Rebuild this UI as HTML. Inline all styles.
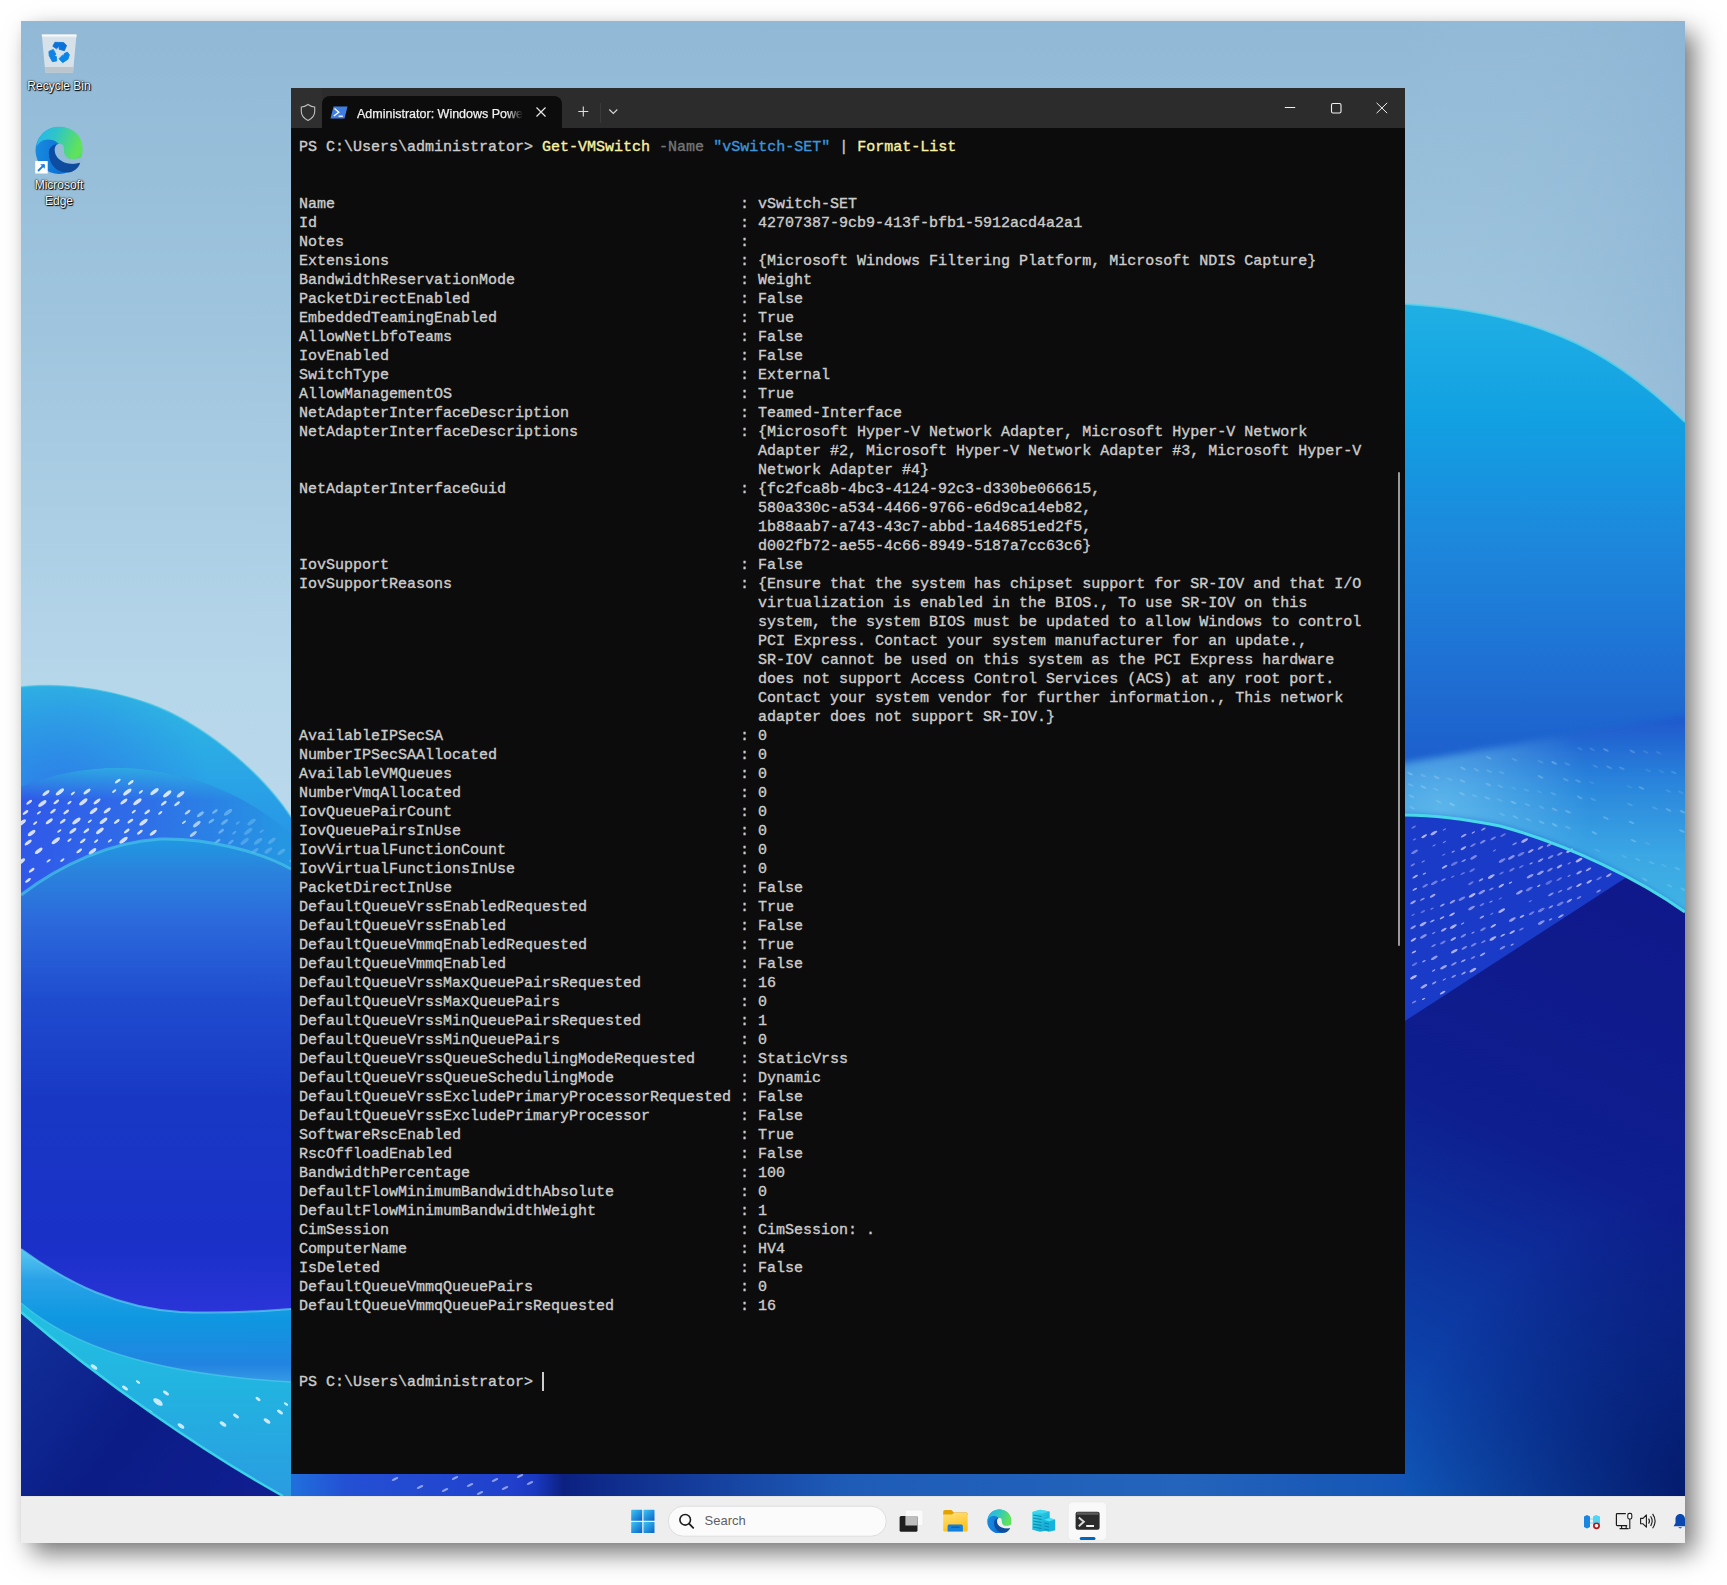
<!DOCTYPE html>
<html><head><meta charset="utf-8">
<style>
*{margin:0;padding:0;box-sizing:border-box}
html,body{width:1727px;height:1585px;overflow:hidden;background:#fff}
body{position:relative;font-family:"Liberation Sans",sans-serif}
#frame{position:absolute;left:21px;top:21px;width:1664px;height:1522px;overflow:hidden;
 box-shadow:10px 11px 24px -1px rgba(0,0,0,.55),0 0 8px rgba(0,0,0,.04)}
#wall{position:absolute;left:0;top:0}
#taskbar{position:absolute;left:0;top:1475px;width:1664px;height:47px;background:#eeeeee;border-top:1px solid #e4e4e4}
#term{position:absolute;left:270px;top:67px;width:1114px;height:1386px;background:#0c0c0c;overflow:hidden}
#tbar{position:absolute;left:0;top:0;width:1114px;height:40px;background:#2c2c2c}
#tab{position:absolute;left:31px;top:8px;width:240px;height:32px;background:#0c0c0c;border-radius:8px 8px 0 0}
#shieldbox{position:absolute;left:0;top:0;width:31px;height:40px;background:#2f2f2f}
#ttl{position:absolute;left:35px;top:10px;-webkit-text-stroke-width:0.25px;width:166px;overflow:hidden;white-space:nowrap;font-size:12.5px;color:#f2f2f2;line-height:16px;
 -webkit-mask-image:linear-gradient(90deg,#000 150px,transparent 166px);mask-image:linear-gradient(90deg,#000 150px,transparent 166px)}
#sbar{position:absolute;left:1107px;top:384px;width:2px;height:474px;background:#9a9a9a;border-radius:1px}
#cursor{position:absolute;left:251px;top:1284px;width:2px;height:19px;background:#cccccc}
#desk{position:absolute;left:0;top:0}
.dl{position:absolute;left:-2px;width:80px;text-align:center;font-size:12px;line-height:15px;color:#fff;
 text-shadow:0 0 2px #000,1px 1px 1px #000,0 0 1px #000}
#srch{position:absolute;left:683.5px;top:14.8px;font-size:13px;line-height:18px;color:#5f5f5f}
pre{position:absolute;left:8px;top:49.5px;font-family:"Liberation Mono",monospace;font-size:15px;line-height:19px;color:#cccccc;white-space:pre;-webkit-text-stroke-width:0.35px}
.y{color:#f9f1a5}.g{color:#767676}.b{color:#3a96dd}
</style></head><body>
<svg width="0" height="0" style="position:absolute">
<defs>
 <linearGradient id="edgeTop" x1="0" y1="0" x2="1" y2="0.3">
  <stop offset="0" stop-color="#22b6f2"/><stop offset="0.45" stop-color="#2fc4c8"/><stop offset="1" stop-color="#5fe35a"/>
 </linearGradient>
 <linearGradient id="edgeBlue" x1="0" y1="0" x2="1" y2="0.15">
  <stop offset="0" stop-color="#1a8ee0"/><stop offset="0.75" stop-color="#0a6cd4"/><stop offset="0.85" stop-color="#3cc8a0"/><stop offset="1" stop-color="#58dc62"/>
 </linearGradient>
 <linearGradient id="edgeDark" x1="0" y1="0" x2="1" y2="1">
  <stop offset="0" stop-color="#0a4ea8"/><stop offset="1" stop-color="#114a98"/>
 </linearGradient>
 <symbol id="edge" viewBox="0 0 48 48">
  <circle cx="24" cy="24.5" r="23.5" fill="url(#edgeBlue)"/>
  <path d="M1.5,21 C3,8 12.5,0.8 24,0.8 C37.5,0.8 47.5,10 47.5,21.5 C47.5,28.5 42.5,33 36.5,33 C31,33 27.5,30 27.5,26 C26.5,18 20,13.5 13,13.5 C7.5,13.5 3.5,16.5 1.5,21 Z" fill="url(#edgeTop)"/>
  <path d="M13.8,27 C13.8,41 25,48 35,46.3 C40.5,45 44,41 45.3,36.5 C41,38 33,38.5 27,35.2 C22,32.3 19.3,28 19.8,22.5 C20,20.5 20.8,19.2 21.8,18.3 C17,18.8 13.8,22 13.8,27 Z" fill="url(#edgeDark)"/>
  <path d="M19.8,22.5 C20.5,19 22.5,17.8 25,17.8 C28,17.8 29.2,20.5 29,24.5 C29,29.5 32,32.8 37,33 C40.5,33.2 44,32.5 48.5,30 L48.5,36 L45.3,36.5 C41,38 33,38.5 27,35.2 C22,32.3 19.3,28 19.8,22.5 Z" fill="currentColor"/>
 </symbol>
 <linearGradient id="winlogo" x1="0" y1="0" x2="1" y2="1">
  <stop offset="0" stop-color="#3cc6f4"/><stop offset="1" stop-color="#0a62c9"/>
 </linearGradient>
 <linearGradient id="folderBody" x1="0" y1="0" x2="0.3" y2="1">
  <stop offset="0" stop-color="#ffe07a"/><stop offset="1" stop-color="#ffc21a"/>
 </linearGradient>
 <linearGradient id="srv" x1="0" y1="0" x2="1" y2="1">
  <stop offset="0" stop-color="#38e0f0"/><stop offset="1" stop-color="#0a9ccc"/>
 </linearGradient>
</defs>
</svg>
<div id="frame">
<svg id="wall" width="1664" height="1475" viewBox="21 21 1664 1475">
<defs>
 <linearGradient id="sky" x1="0" y1="21" x2="0" y2="900" gradientUnits="userSpaceOnUse">
  <stop offset="0" stop-color="#91b9d6"/><stop offset="0.35" stop-color="#9fc5de"/><stop offset="0.75" stop-color="#b6d6ea"/><stop offset="1" stop-color="#bcd9ec"/>
 </linearGradient>
 <linearGradient id="skyR" x1="1405" y1="0" x2="1685" y2="0" gradientUnits="userSpaceOnUse">
  <stop offset="0" stop-color="#9ec3dc" stop-opacity="0"/><stop offset="1" stop-color="#8cb3d3" stop-opacity="0.6"/>
 </linearGradient>
 <linearGradient id="l2" x1="0" y1="684" x2="0" y2="860" gradientUnits="userSpaceOnUse">
  <stop offset="0" stop-color="#2ebbe2"/><stop offset="0.5" stop-color="#2aa6e6"/><stop offset="1" stop-color="#2690e6"/>
 </linearGradient>
 <radialGradient id="l2shade" cx="60" cy="800" r="150" gradientUnits="userSpaceOnUse">
  <stop offset="0" stop-color="#2f6ee8" stop-opacity="0.7"/><stop offset="1" stop-color="#2f6ee8" stop-opacity="0"/>
 </radialGradient>
 <linearGradient id="l3" x1="21" y1="0" x2="291" y2="0" gradientUnits="userSpaceOnUse">
  <stop offset="0" stop-color="#3058e8"/><stop offset="0.45" stop-color="#2f6ee8"/><stop offset="1" stop-color="#2598e2"/>
 </linearGradient>
 <linearGradient id="l3rim" x1="0" y1="760" x2="0" y2="800" gradientUnits="userSpaceOnUse">
  <stop offset="0" stop-color="#2cc0e0" stop-opacity="0.9"/><stop offset="1" stop-color="#2cc0e0" stop-opacity="0"/>
 </linearGradient>
 <linearGradient id="l4" x1="0" y1="840" x2="0" y2="1310" gradientUnits="userSpaceOnUse">
  <stop offset="0" stop-color="#2098e2"/><stop offset="0.064" stop-color="#2a84dc"/><stop offset="0.17" stop-color="#2c6adc"/><stop offset="0.34" stop-color="#1f4ccf"/><stop offset="0.55" stop-color="#1838c4"/><stop offset="0.87" stop-color="#1a30c8"/><stop offset="1" stop-color="#2a34d8"/>
 </linearGradient>
 <linearGradient id="l5" x1="0" y1="1250" x2="0" y2="1385" gradientUnits="userSpaceOnUse">
  <stop offset="0" stop-color="#58c8f0"/><stop offset="0.22" stop-color="#2aa2e8"/><stop offset="0.5" stop-color="#0e98e0"/><stop offset="0.85" stop-color="#2284e0"/><stop offset="1" stop-color="#3a9ee6"/>
 </linearGradient>
 <linearGradient id="l6" x1="0" y1="1310" x2="0" y2="1496" gradientUnits="userSpaceOnUse">
  <stop offset="0" stop-color="#22c0e2"/><stop offset="0.4" stop-color="#22b4e0"/><stop offset="1" stop-color="#2a9ce0"/>
 </linearGradient>
 <linearGradient id="l7" x1="21" y1="1320" x2="260" y2="1496" gradientUnits="userSpaceOnUse">
  <stop offset="0" stop-color="#12309a"/><stop offset="0.5" stop-color="#0b1c86"/><stop offset="1" stop-color="#101e90"/>
 </linearGradient>
 <linearGradient id="r2" x1="0" y1="300" x2="0" y2="780" gradientUnits="userSpaceOnUse">
  <stop offset="0" stop-color="#20b0e4"/><stop offset="0.25" stop-color="#12a0e2"/><stop offset="0.5" stop-color="#1d88dc"/><stop offset="0.8" stop-color="#1f6dd2"/><stop offset="1" stop-color="#1c5ccc"/>
 </linearGradient>
 <linearGradient id="r3" x1="0" y1="716" x2="0" y2="912" gradientUnits="userSpaceOnUse">
  <stop offset="0" stop-color="#1e56cc"/><stop offset="0.35" stop-color="#2a86dc"/><stop offset="0.7" stop-color="#3aa6e4"/><stop offset="1" stop-color="#40b4e4"/>
 </linearGradient>
 <filter id="soft" x="-5%" y="-20%" width="110%" height="140%"><feGaussianBlur stdDeviation="3.5"/></filter>
 <radialGradient id="r3hl" cx="1440" cy="805" r="150" gradientUnits="userSpaceOnUse">
  <stop offset="0" stop-color="#80d4f4" stop-opacity="0.55"/><stop offset="1" stop-color="#80d4f4" stop-opacity="0"/>
 </radialGradient>
 <linearGradient id="r5" x1="1685" y1="880" x2="1405" y2="1496" gradientUnits="userSpaceOnUse">
  <stop offset="0" stop-color="#10188a"/><stop offset="0.45" stop-color="#0e1e8e"/><stop offset="0.8" stop-color="#0c40a8"/><stop offset="1" stop-color="#1058b8"/>
 </linearGradient>
 <radialGradient id="r5b" cx="1700" cy="1496" r="300" gradientUnits="userSpaceOnUse">
  <stop offset="0" stop-color="#000850" stop-opacity="0.7"/><stop offset="1" stop-color="#000850" stop-opacity="0"/>
 </radialGradient>
 <linearGradient id="bot" x1="291" y1="0" x2="1405" y2="0" gradientUnits="userSpaceOnUse">
  <stop offset="0" stop-color="#2070dc"/><stop offset="0.05" stop-color="#2450d4"/><stop offset="0.2" stop-color="#2040cc"/><stop offset="0.22" stop-color="#1a38c0"/><stop offset="0.245" stop-color="#0c2080"/><stop offset="0.27" stop-color="#0e2888"/><stop offset="0.5" stop-color="#1e5cb8"/><stop offset="0.8" stop-color="#2464bc"/><stop offset="1" stop-color="#1454b4"/>
 </linearGradient>
</defs>
<rect x="21" y="21" width="1664" height="1475" fill="url(#sky)"/>
<rect x="1405" y="21" width="280" height="900" fill="url(#skyR)"/>
<!-- LEFT -->
<path d="M21,687 C45,684 95,684 150,704 C200,722 260,770 291,817 L330,880 L330,1500 L21,1500 Z" fill="url(#l2)"/>
<path d="M21,687 C45,684 95,684 150,704 C200,722 260,770 291,817 L330,880 L330,1500 L21,1500 Z" fill="url(#l2shade)"/>
<path d="M21,687 C45,684 95,684 150,704 C200,722 260,770 291,817" fill="none" stroke="#48c8e6" stroke-width="1.5" opacity="0.7"/>
<path d="M21,787 C60,770 110,764 150,770 C210,778 260,805 291,835 L330,880 L330,1500 L21,1500 Z" fill="url(#l3)"/>
<path d="M21,787 C60,770 110,764 150,770 C210,778 260,805 291,835 L291,860 L21,820 Z" fill="url(#l3rim)"/>
<ellipse cx="21.8" cy="822.8" rx="5.0" ry="1.9" transform="rotate(-38 21.8 822.8)" fill="#ffffff" opacity="0.80"/>
<ellipse cx="25.5" cy="812.5" rx="3.4" ry="1.3" transform="rotate(-38 25.5 812.5)" fill="#ffffff" opacity="0.80"/>
<ellipse cx="29.2" cy="802.3" rx="3.4" ry="1.3" transform="rotate(-38 29.2 802.3)" fill="#ffffff" opacity="0.80"/>
<ellipse cx="21.3" cy="861.6" rx="4.6" ry="1.8" transform="rotate(-38 21.3 861.6)" fill="#ffffff" opacity="0.80"/>
<ellipse cx="28.2" cy="842.6" rx="4.2" ry="1.6" transform="rotate(-38 28.2 842.6)" fill="#ffffff" opacity="0.80"/>
<ellipse cx="31.6" cy="833.0" rx="4.6" ry="1.8" transform="rotate(-38 31.6 833.0)" fill="#ffffff" opacity="0.80"/>
<ellipse cx="35.2" cy="823.1" rx="2.5" ry="1.0" transform="rotate(-38 35.2 823.1)" fill="#ffffff" opacity="0.80"/>
<ellipse cx="38.9" cy="812.7" rx="2.5" ry="1.0" transform="rotate(-38 38.9 812.7)" fill="#ffffff" opacity="0.80"/>
<ellipse cx="42.3" cy="803.5" rx="5.0" ry="1.9" transform="rotate(-38 42.3 803.5)" fill="#ffffff" opacity="0.80"/>
<ellipse cx="46.0" cy="793.1" rx="4.2" ry="1.6" transform="rotate(-38 46.0 793.1)" fill="#ffffff" opacity="0.80"/>
<ellipse cx="28.0" cy="880.4" rx="3.4" ry="1.3" transform="rotate(-38 28.0 880.4)" fill="#ffffff" opacity="0.80"/>
<ellipse cx="31.7" cy="870.3" rx="3.4" ry="1.3" transform="rotate(-38 31.7 870.3)" fill="#ffffff" opacity="0.80"/>
<ellipse cx="38.7" cy="850.8" rx="4.6" ry="1.8" transform="rotate(-38 38.7 850.8)" fill="#ffffff" opacity="0.80"/>
<ellipse cx="49.3" cy="821.3" rx="4.2" ry="1.6" transform="rotate(-38 49.3 821.3)" fill="#ffffff" opacity="0.80"/>
<ellipse cx="53.0" cy="811.2" rx="3.4" ry="1.3" transform="rotate(-38 53.0 811.2)" fill="#ffffff" opacity="0.80"/>
<ellipse cx="56.3" cy="801.9" rx="3.4" ry="1.3" transform="rotate(-38 56.3 801.9)" fill="#ffffff" opacity="0.80"/>
<ellipse cx="59.9" cy="791.9" rx="5.0" ry="1.9" transform="rotate(-38 59.9 791.9)" fill="#ffffff" opacity="0.80"/>
<ellipse cx="48.6" cy="860.8" rx="2.5" ry="1.0" transform="rotate(-38 48.6 860.8)" fill="#ffffff" opacity="0.80"/>
<ellipse cx="55.8" cy="840.7" rx="5.0" ry="1.9" transform="rotate(-38 55.8 840.7)" fill="#ffffff" opacity="0.80"/>
<ellipse cx="59.3" cy="831.0" rx="2.5" ry="1.0" transform="rotate(-38 59.3 831.0)" fill="#ffffff" opacity="0.80"/>
<ellipse cx="62.8" cy="821.3" rx="3.4" ry="1.3" transform="rotate(-38 62.8 821.3)" fill="#ffffff" opacity="0.80"/>
<ellipse cx="66.2" cy="812.0" rx="3.4" ry="1.3" transform="rotate(-38 66.2 812.0)" fill="#ffffff" opacity="0.80"/>
<ellipse cx="69.5" cy="802.6" rx="2.5" ry="1.0" transform="rotate(-38 69.5 802.6)" fill="#ffffff" opacity="0.80"/>
<ellipse cx="72.9" cy="793.4" rx="2.5" ry="1.0" transform="rotate(-38 72.9 793.4)" fill="#ffffff" opacity="0.80"/>
<ellipse cx="62.4" cy="860.1" rx="2.5" ry="1.0" transform="rotate(-38 62.4 860.1)" fill="#ffffff" opacity="0.80"/>
<ellipse cx="69.5" cy="840.1" rx="2.5" ry="1.0" transform="rotate(-38 69.5 840.1)" fill="#ffffff" opacity="0.80"/>
<ellipse cx="72.9" cy="830.8" rx="4.2" ry="1.6" transform="rotate(-38 72.9 830.8)" fill="#ffffff" opacity="0.80"/>
<ellipse cx="76.4" cy="821.0" rx="5.0" ry="1.9" transform="rotate(-38 76.4 821.0)" fill="#ffffff" opacity="0.80"/>
<ellipse cx="83.3" cy="801.9" rx="5.0" ry="1.9" transform="rotate(-38 83.3 801.9)" fill="#ffffff" opacity="0.80"/>
<ellipse cx="87.0" cy="791.6" rx="4.2" ry="1.6" transform="rotate(-38 87.0 791.6)" fill="#ffffff" opacity="0.80"/>
<ellipse cx="79.2" cy="850.9" rx="3.4" ry="1.3" transform="rotate(-38 79.2 850.9)" fill="#ffffff" opacity="0.80"/>
<ellipse cx="82.8" cy="840.9" rx="3.4" ry="1.3" transform="rotate(-38 82.8 840.9)" fill="#ffffff" opacity="0.80"/>
<ellipse cx="86.4" cy="830.8" rx="3.4" ry="1.3" transform="rotate(-38 86.4 830.8)" fill="#ffffff" opacity="0.80"/>
<ellipse cx="89.8" cy="821.3" rx="2.5" ry="1.0" transform="rotate(-38 89.8 821.3)" fill="#ffffff" opacity="0.80"/>
<ellipse cx="93.6" cy="810.9" rx="4.6" ry="1.8" transform="rotate(-38 93.6 810.9)" fill="#ffffff" opacity="0.80"/>
<ellipse cx="97.0" cy="801.4" rx="4.2" ry="1.6" transform="rotate(-38 97.0 801.4)" fill="#ffffff" opacity="0.80"/>
<ellipse cx="92.5" cy="851.4" rx="4.6" ry="1.8" transform="rotate(-38 92.5 851.4)" fill="#ffffff" opacity="0.80"/>
<ellipse cx="96.2" cy="841.1" rx="2.5" ry="1.0" transform="rotate(-38 96.2 841.1)" fill="#ffffff" opacity="0.80"/>
<ellipse cx="99.9" cy="830.9" rx="4.6" ry="1.8" transform="rotate(-38 99.9 830.9)" fill="#ffffff" opacity="0.80"/>
<ellipse cx="103.5" cy="820.8" rx="4.6" ry="1.8" transform="rotate(-38 103.5 820.8)" fill="#ffffff" opacity="0.80"/>
<ellipse cx="107.2" cy="810.5" rx="4.2" ry="1.6" transform="rotate(-38 107.2 810.5)" fill="#ffffff" opacity="0.80"/>
<ellipse cx="114.2" cy="791.1" rx="2.5" ry="1.0" transform="rotate(-38 114.2 791.1)" fill="#ffffff" opacity="0.80"/>
<ellipse cx="117.8" cy="781.1" rx="3.4" ry="1.3" transform="rotate(-38 117.8 781.1)" fill="#ffffff" opacity="0.80"/>
<ellipse cx="109.9" cy="840.7" rx="2.5" ry="1.0" transform="rotate(-38 109.9 840.7)" fill="#ffffff" opacity="0.80"/>
<ellipse cx="116.8" cy="821.5" rx="3.4" ry="1.3" transform="rotate(-38 116.8 821.5)" fill="#ffffff" opacity="0.80"/>
<ellipse cx="123.9" cy="801.6" rx="4.2" ry="1.6" transform="rotate(-38 123.9 801.6)" fill="#ffffff" opacity="0.80"/>
<ellipse cx="127.3" cy="792.1" rx="5.0" ry="1.9" transform="rotate(-38 127.3 792.1)" fill="#ffffff" opacity="0.80"/>
<ellipse cx="130.8" cy="782.5" rx="3.4" ry="1.3" transform="rotate(-38 130.8 782.5)" fill="#ffffff" opacity="0.80"/>
<ellipse cx="123.5" cy="840.2" rx="5.0" ry="1.9" transform="rotate(-38 123.5 840.2)" fill="#ffffff" opacity="0.80"/>
<ellipse cx="126.8" cy="831.0" rx="3.4" ry="1.3" transform="rotate(-38 126.8 831.0)" fill="#ffffff" opacity="0.80"/>
<ellipse cx="130.4" cy="821.1" rx="3.4" ry="1.3" transform="rotate(-38 130.4 821.1)" fill="#ffffff" opacity="0.80"/>
<ellipse cx="133.8" cy="811.6" rx="2.5" ry="1.0" transform="rotate(-38 133.8 811.6)" fill="#ffffff" opacity="0.80"/>
<ellipse cx="137.4" cy="801.8" rx="5.0" ry="1.9" transform="rotate(-38 137.4 801.8)" fill="#ffffff" opacity="0.80"/>
<ellipse cx="140.9" cy="791.9" rx="2.5" ry="1.0" transform="rotate(-38 140.9 791.9)" fill="#ffffff" opacity="0.80"/>
<ellipse cx="139.9" cy="832.2" rx="3.4" ry="1.3" transform="rotate(-38 139.9 832.2)" fill="#ffffff" opacity="0.80"/>
<ellipse cx="143.5" cy="822.2" rx="5.0" ry="1.9" transform="rotate(-38 143.5 822.2)" fill="#ffffff" opacity="0.80"/>
<ellipse cx="147.2" cy="812.0" rx="3.4" ry="1.3" transform="rotate(-38 147.2 812.0)" fill="#ffffff" opacity="0.80"/>
<ellipse cx="154.5" cy="791.6" rx="5.0" ry="1.9" transform="rotate(-38 154.5 791.6)" fill="#ffffff" opacity="0.80"/>
<ellipse cx="153.2" cy="832.7" rx="4.2" ry="1.6" transform="rotate(-38 153.2 832.7)" fill="#ffffff" opacity="0.80"/>
<ellipse cx="160.3" cy="812.9" rx="2.5" ry="1.0" transform="rotate(-38 160.3 812.9)" fill="#ffffff" opacity="0.80"/>
<ellipse cx="163.8" cy="803.3" rx="3.4" ry="1.3" transform="rotate(-38 163.8 803.3)" fill="#ffffff" opacity="0.80"/>
<ellipse cx="167.2" cy="793.9" rx="5.0" ry="1.9" transform="rotate(-38 167.2 793.9)" fill="#ffffff" opacity="0.80"/>
<ellipse cx="177.1" cy="803.8" rx="3.4" ry="1.3" transform="rotate(-38 177.1 803.8)" fill="#ffffff" opacity="0.75"/>
<ellipse cx="180.6" cy="794.3" rx="4.6" ry="1.8" transform="rotate(-38 180.6 794.3)" fill="#ffffff" opacity="0.72"/>
<ellipse cx="184.0" cy="822.3" rx="2.5" ry="1.0" transform="rotate(-38 184.0 822.3)" fill="#ffffff" opacity="0.69"/>
<ellipse cx="187.6" cy="812.2" rx="3.4" ry="1.3" transform="rotate(-38 187.6 812.2)" fill="#ffffff" opacity="0.66"/>
<ellipse cx="193.3" cy="833.9" rx="4.2" ry="1.6" transform="rotate(-38 193.3 833.9)" fill="#ffffff" opacity="0.62"/>
<ellipse cx="196.8" cy="824.1" rx="4.6" ry="1.8" transform="rotate(-38 196.8 824.1)" fill="#ffffff" opacity="0.59"/>
<ellipse cx="200.4" cy="814.3" rx="4.2" ry="1.6" transform="rotate(-38 200.4 814.3)" fill="#bfeaff" opacity="0.57"/>
<ellipse cx="211.4" cy="821.1" rx="3.4" ry="1.3" transform="rotate(-38 211.4 821.1)" fill="#bfeaff" opacity="0.48"/>
<ellipse cx="214.9" cy="811.5" rx="3.4" ry="1.3" transform="rotate(-38 214.9 811.5)" fill="#bfeaff" opacity="0.45"/>
<ellipse cx="217.6" cy="841.3" rx="3.4" ry="1.3" transform="rotate(-38 217.6 841.3)" fill="#bfeaff" opacity="0.43"/>
<ellipse cx="221.2" cy="831.3" rx="3.4" ry="1.3" transform="rotate(-38 221.2 831.3)" fill="#bfeaff" opacity="0.41"/>
<ellipse cx="224.6" cy="821.9" rx="4.2" ry="1.6" transform="rotate(-38 224.6 821.9)" fill="#bfeaff" opacity="0.38"/>
<ellipse cx="228.1" cy="812.3" rx="5.0" ry="1.9" transform="rotate(-38 228.1 812.3)" fill="#bfeaff" opacity="0.35"/>
<ellipse cx="230.8" cy="842.2" rx="3.4" ry="1.3" transform="rotate(-38 230.8 842.2)" fill="#bfeaff" opacity="0.33"/>
<ellipse cx="234.3" cy="832.6" rx="2.5" ry="1.0" transform="rotate(-38 234.3 832.6)" fill="#bfeaff" opacity="0.31"/>
<ellipse cx="237.7" cy="823.0" rx="2.5" ry="1.0" transform="rotate(-38 237.7 823.0)" fill="#bfeaff" opacity="0.28"/>
<ellipse cx="244.6" cy="841.4" rx="5.0" ry="1.9" transform="rotate(-38 244.6 841.4)" fill="#bfeaff" opacity="0.25"/>
<ellipse cx="248.2" cy="831.4" rx="5.0" ry="1.9" transform="rotate(-38 248.2 831.4)" fill="#bfeaff" opacity="0.25"/>
<ellipse cx="251.6" cy="822.0" rx="5.0" ry="1.9" transform="rotate(-38 251.6 822.0)" fill="#bfeaff" opacity="0.25"/>
<ellipse cx="254.6" cy="851.2" rx="4.6" ry="1.8" transform="rotate(-38 254.6 851.2)" fill="#bfeaff" opacity="0.25"/>
<ellipse cx="258.1" cy="841.3" rx="5.0" ry="1.9" transform="rotate(-38 258.1 841.3)" fill="#bfeaff" opacity="0.25"/>
<ellipse cx="261.7" cy="831.3" rx="2.5" ry="1.0" transform="rotate(-38 261.7 831.3)" fill="#bfeaff" opacity="0.25"/>
<ellipse cx="268.3" cy="850.5" rx="4.6" ry="1.8" transform="rotate(-38 268.3 850.5)" fill="#bfeaff" opacity="0.25"/>
<ellipse cx="271.8" cy="840.8" rx="4.6" ry="1.8" transform="rotate(-38 271.8 840.8)" fill="#bfeaff" opacity="0.25"/>
<ellipse cx="281.3" cy="851.8" rx="4.6" ry="1.8" transform="rotate(-38 281.3 851.8)" fill="#bfeaff" opacity="0.25"/>
<ellipse cx="291.9" cy="860.0" rx="3.4" ry="1.3" transform="rotate(-38 291.9 860.0)" fill="#bfeaff" opacity="0.25"/>
<path d="M21,895 C60,865 110,842 160,839 C210,838 260,852 291,869 L330,880 L330,1500 L21,1500 Z" fill="url(#l4)"/>
<path d="M21,895 C60,865 110,842 160,839 C210,838 260,852 291,869" fill="none" stroke="#46c4e8" stroke-width="3" opacity="0.7"/>
<path d="M21,1249 C70,1285 120,1308 180,1312 C230,1314 265,1311 291,1309 L330,1309 L330,1500 L21,1500 Z" fill="url(#l5)"/>
<path d="M21,1249 C70,1285 120,1308 180,1312 C230,1314 265,1311 291,1309" fill="none" stroke="#5cd0f0" stroke-width="2" opacity="0.7"/>
<path d="M21,1303 C70,1345 150,1374 291,1382 L330,1382 L330,1500 L21,1500 Z" fill="url(#l6)"/>
<path d="M21,1303 C70,1345 150,1374 291,1382" fill="none" stroke="#50d0ea" stroke-width="1.5" opacity="0.6"/>
<ellipse cx="94" cy="1367" rx="3.8" ry="1.8" transform="rotate(35 94 1367)" fill="#e8f4ff" opacity="0.85"/>
<ellipse cx="125" cy="1388" rx="3.4" ry="1.6" transform="rotate(35 125 1388)" fill="#e8f4ff" opacity="0.85"/>
<ellipse cx="138" cy="1382" rx="2.5" ry="1.2" transform="rotate(35 138 1382)" fill="#e8f4ff" opacity="0.85"/>
<ellipse cx="158" cy="1402" rx="5.5" ry="2.6" transform="rotate(35 158 1402)" fill="#e8f4ff" opacity="0.85"/>
<ellipse cx="149" cy="1412" rx="4.6" ry="2.2" transform="rotate(35 149 1412)" fill="#e8f4ff" opacity="0.85"/>
<ellipse cx="166" cy="1393" rx="3.4" ry="1.6" transform="rotate(35 166 1393)" fill="#e8f4ff" opacity="0.85"/>
<ellipse cx="181" cy="1426" rx="3.8" ry="1.8" transform="rotate(35 181 1426)" fill="#e8f4ff" opacity="0.85"/>
<ellipse cx="223" cy="1424" rx="3.8" ry="1.8" transform="rotate(35 223 1424)" fill="#e8f4ff" opacity="0.85"/>
<ellipse cx="236" cy="1416" rx="3.4" ry="1.6" transform="rotate(35 236 1416)" fill="#e8f4ff" opacity="0.85"/>
<ellipse cx="258" cy="1399" rx="2.9" ry="1.4" transform="rotate(35 258 1399)" fill="#e8f4ff" opacity="0.85"/>
<ellipse cx="267" cy="1421" rx="3.8" ry="1.8" transform="rotate(35 267 1421)" fill="#e8f4ff" opacity="0.85"/>
<ellipse cx="280" cy="1412" rx="3.4" ry="1.6" transform="rotate(35 280 1412)" fill="#e8f4ff" opacity="0.85"/>
<ellipse cx="286" cy="1404" rx="2.5" ry="1.2" transform="rotate(35 286 1404)" fill="#e8f4ff" opacity="0.85"/>
<path d="M21,1312 C100,1380 200,1450 283,1496 L21,1496 Z" fill="url(#l7)"/>
<path d="M21,1312 C100,1380 200,1450 283,1496" fill="none" stroke="#3ad4e8" stroke-width="2.5"/>
<!-- RIGHT -->
<path d="M1405,304 C1440,306 1500,312 1560,336 C1610,356 1650,388 1685,422 L1685,1500 L1405,1500 Z" fill="url(#r2)"/>
<path d="M1405,304 C1440,306 1500,312 1560,336 C1610,356 1650,388 1685,422" fill="none" stroke="#5fd2ea" stroke-width="2" opacity="0.8"/>
<path d="M1380,767 C1500,748 1600,728 1700,714 L1700,924 C1640,880 1570,845 1500,826 C1460,818 1430,815 1380,815 Z" fill="url(#r3)" filter="url(#soft)"/>
<path d="M1380,767 C1500,748 1600,728 1700,714 L1700,924 C1640,880 1570,845 1500,826 C1460,818 1430,815 1380,815 Z" fill="url(#r3hl)" filter="url(#soft)"/>
<ellipse cx="1579.8" cy="748.7" rx="3.2" ry="1.1" transform="rotate(25 1579.8 748.7)" fill="#d0f0ff" opacity="0.13"/>
<ellipse cx="1592.2" cy="749.4" rx="3.2" ry="1.1" transform="rotate(25 1592.2 749.4)" fill="#d0f0ff" opacity="0.15"/>
<ellipse cx="1605.9" cy="750.0" rx="3.2" ry="1.1" transform="rotate(25 1605.9 750.0)" fill="#d0f0ff" opacity="0.25"/>
<ellipse cx="1632.3" cy="751.4" rx="3.2" ry="1.1" transform="rotate(25 1632.3 751.4)" fill="#d0f0ff" opacity="0.21"/>
<ellipse cx="1645.7" cy="752.0" rx="3.2" ry="1.1" transform="rotate(25 1645.7 752.0)" fill="#d0f0ff" opacity="0.12"/>
<ellipse cx="1658.5" cy="752.7" rx="3.2" ry="1.1" transform="rotate(25 1658.5 752.7)" fill="#d0f0ff" opacity="0.12"/>
<ellipse cx="1488.6" cy="757.7" rx="3.2" ry="1.1" transform="rotate(25 1488.6 757.7)" fill="#d0f0ff" opacity="0.22"/>
<ellipse cx="1514.6" cy="759.8" rx="3.2" ry="1.1" transform="rotate(25 1514.6 759.8)" fill="#d0f0ff" opacity="0.15"/>
<ellipse cx="1540.5" cy="761.8" rx="3.2" ry="1.1" transform="rotate(25 1540.5 761.8)" fill="#d0f0ff" opacity="0.14"/>
<ellipse cx="1554.2" cy="762.9" rx="3.2" ry="1.1" transform="rotate(25 1554.2 762.9)" fill="#d0f0ff" opacity="0.27"/>
<ellipse cx="1567.4" cy="764.0" rx="3.2" ry="1.1" transform="rotate(25 1567.4 764.0)" fill="#d0f0ff" opacity="0.16"/>
<ellipse cx="1595.2" cy="766.2" rx="3.2" ry="1.1" transform="rotate(25 1595.2 766.2)" fill="#d0f0ff" opacity="0.15"/>
<ellipse cx="1609.0" cy="767.3" rx="3.2" ry="1.1" transform="rotate(25 1609.0 767.3)" fill="#d0f0ff" opacity="0.20"/>
<ellipse cx="1621.7" cy="768.3" rx="3.2" ry="1.1" transform="rotate(25 1621.7 768.3)" fill="#d0f0ff" opacity="0.18"/>
<ellipse cx="1648.2" cy="770.5" rx="3.2" ry="1.1" transform="rotate(25 1648.2 770.5)" fill="#d0f0ff" opacity="0.11"/>
<ellipse cx="1661.5" cy="771.5" rx="3.2" ry="1.1" transform="rotate(25 1661.5 771.5)" fill="#d0f0ff" opacity="0.10"/>
<ellipse cx="1673.7" cy="772.5" rx="3.2" ry="1.1" transform="rotate(25 1673.7 772.5)" fill="#d0f0ff" opacity="0.17"/>
<ellipse cx="1463.0" cy="768.4" rx="3.2" ry="1.1" transform="rotate(25 1463.0 768.4)" fill="#d0f0ff" opacity="0.22"/>
<ellipse cx="1476.5" cy="769.9" rx="3.2" ry="1.1" transform="rotate(25 1476.5 769.9)" fill="#d0f0ff" opacity="0.17"/>
<ellipse cx="1489.2" cy="771.3" rx="3.2" ry="1.1" transform="rotate(25 1489.2 771.3)" fill="#d0f0ff" opacity="0.16"/>
<ellipse cx="1501.6" cy="772.6" rx="3.2" ry="1.1" transform="rotate(25 1501.6 772.6)" fill="#d0f0ff" opacity="0.15"/>
<ellipse cx="1540.5" cy="776.9" rx="3.2" ry="1.1" transform="rotate(25 1540.5 776.9)" fill="#d0f0ff" opacity="0.25"/>
<ellipse cx="1565.8" cy="779.7" rx="3.2" ry="1.1" transform="rotate(25 1565.8 779.7)" fill="#d0f0ff" opacity="0.20"/>
<ellipse cx="1578.0" cy="781.0" rx="3.2" ry="1.1" transform="rotate(25 1578.0 781.0)" fill="#d0f0ff" opacity="0.21"/>
<ellipse cx="1591.4" cy="782.5" rx="3.2" ry="1.1" transform="rotate(25 1591.4 782.5)" fill="#d0f0ff" opacity="0.10"/>
<ellipse cx="1629.3" cy="786.7" rx="3.2" ry="1.1" transform="rotate(25 1629.3 786.7)" fill="#d0f0ff" opacity="0.10"/>
<ellipse cx="1641.4" cy="788.0" rx="3.2" ry="1.1" transform="rotate(25 1641.4 788.0)" fill="#d0f0ff" opacity="0.24"/>
<ellipse cx="1668.3" cy="791.0" rx="3.2" ry="1.1" transform="rotate(25 1668.3 791.0)" fill="#d0f0ff" opacity="0.13"/>
<ellipse cx="1680.7" cy="792.3" rx="3.2" ry="1.1" transform="rotate(25 1680.7 792.3)" fill="#d0f0ff" opacity="0.13"/>
<ellipse cx="1410.1" cy="773.7" rx="3.2" ry="1.1" transform="rotate(25 1410.1 773.7)" fill="#d0f0ff" opacity="0.27"/>
<ellipse cx="1423.1" cy="775.5" rx="3.2" ry="1.1" transform="rotate(25 1423.1 775.5)" fill="#d0f0ff" opacity="0.18"/>
<ellipse cx="1436.7" cy="777.4" rx="3.2" ry="1.1" transform="rotate(25 1436.7 777.4)" fill="#d0f0ff" opacity="0.22"/>
<ellipse cx="1449.8" cy="779.3" rx="3.2" ry="1.1" transform="rotate(25 1449.8 779.3)" fill="#d0f0ff" opacity="0.14"/>
<ellipse cx="1462.4" cy="781.0" rx="3.2" ry="1.1" transform="rotate(25 1462.4 781.0)" fill="#d0f0ff" opacity="0.21"/>
<ellipse cx="1488.2" cy="784.6" rx="3.2" ry="1.1" transform="rotate(25 1488.2 784.6)" fill="#d0f0ff" opacity="0.21"/>
<ellipse cx="1500.3" cy="786.3" rx="3.2" ry="1.1" transform="rotate(25 1500.3 786.3)" fill="#d0f0ff" opacity="0.17"/>
<ellipse cx="1513.8" cy="788.2" rx="3.2" ry="1.1" transform="rotate(25 1513.8 788.2)" fill="#d0f0ff" opacity="0.11"/>
<ellipse cx="1526.3" cy="790.0" rx="3.2" ry="1.1" transform="rotate(25 1526.3 790.0)" fill="#d0f0ff" opacity="0.13"/>
<ellipse cx="1539.4" cy="791.8" rx="3.2" ry="1.1" transform="rotate(25 1539.4 791.8)" fill="#d0f0ff" opacity="0.10"/>
<ellipse cx="1553.2" cy="793.7" rx="3.2" ry="1.1" transform="rotate(25 1553.2 793.7)" fill="#d0f0ff" opacity="0.18"/>
<ellipse cx="1579.6" cy="797.4" rx="3.2" ry="1.1" transform="rotate(25 1579.6 797.4)" fill="#d0f0ff" opacity="0.22"/>
<ellipse cx="1593.0" cy="799.3" rx="3.2" ry="1.1" transform="rotate(25 1593.0 799.3)" fill="#d0f0ff" opacity="0.17"/>
<ellipse cx="1630.0" cy="804.5" rx="3.2" ry="1.1" transform="rotate(25 1630.0 804.5)" fill="#d0f0ff" opacity="0.17"/>
<ellipse cx="1654.8" cy="808.0" rx="3.2" ry="1.1" transform="rotate(25 1654.8 808.0)" fill="#d0f0ff" opacity="0.16"/>
<ellipse cx="1668.5" cy="809.9" rx="3.2" ry="1.1" transform="rotate(25 1668.5 809.9)" fill="#d0f0ff" opacity="0.22"/>
<ellipse cx="1682.5" cy="811.8" rx="3.2" ry="1.1" transform="rotate(25 1682.5 811.8)" fill="#d0f0ff" opacity="0.26"/>
<ellipse cx="1410.7" cy="785.0" rx="3.2" ry="1.1" transform="rotate(25 1410.7 785.0)" fill="#d0f0ff" opacity="0.18"/>
<ellipse cx="1423.3" cy="787.1" rx="3.2" ry="1.1" transform="rotate(25 1423.3 787.1)" fill="#d0f0ff" opacity="0.24"/>
<ellipse cx="1435.8" cy="789.2" rx="3.2" ry="1.1" transform="rotate(25 1435.8 789.2)" fill="#d0f0ff" opacity="0.14"/>
<ellipse cx="1462.0" cy="793.7" rx="3.2" ry="1.1" transform="rotate(25 1462.0 793.7)" fill="#d0f0ff" opacity="0.24"/>
<ellipse cx="1474.4" cy="795.8" rx="3.2" ry="1.1" transform="rotate(25 1474.4 795.8)" fill="#d0f0ff" opacity="0.14"/>
<ellipse cx="1487.2" cy="798.0" rx="3.2" ry="1.1" transform="rotate(25 1487.2 798.0)" fill="#d0f0ff" opacity="0.20"/>
<ellipse cx="1499.8" cy="800.1" rx="3.2" ry="1.1" transform="rotate(25 1499.8 800.1)" fill="#d0f0ff" opacity="0.14"/>
<ellipse cx="1513.6" cy="802.5" rx="3.2" ry="1.1" transform="rotate(25 1513.6 802.5)" fill="#d0f0ff" opacity="0.27"/>
<ellipse cx="1527.5" cy="804.8" rx="3.2" ry="1.1" transform="rotate(25 1527.5 804.8)" fill="#d0f0ff" opacity="0.18"/>
<ellipse cx="1541.5" cy="807.2" rx="3.2" ry="1.1" transform="rotate(25 1541.5 807.2)" fill="#d0f0ff" opacity="0.17"/>
<ellipse cx="1554.5" cy="809.4" rx="3.2" ry="1.1" transform="rotate(25 1554.5 809.4)" fill="#d0f0ff" opacity="0.24"/>
<ellipse cx="1567.9" cy="811.7" rx="3.2" ry="1.1" transform="rotate(25 1567.9 811.7)" fill="#d0f0ff" opacity="0.25"/>
<ellipse cx="1605.7" cy="818.1" rx="3.2" ry="1.1" transform="rotate(25 1605.7 818.1)" fill="#d0f0ff" opacity="0.23"/>
<ellipse cx="1631.6" cy="822.5" rx="3.2" ry="1.1" transform="rotate(25 1631.6 822.5)" fill="#d0f0ff" opacity="0.26"/>
<ellipse cx="1681.9" cy="831.1" rx="3.2" ry="1.1" transform="rotate(25 1681.9 831.1)" fill="#d0f0ff" opacity="0.25"/>
<ellipse cx="1411.4" cy="796.3" rx="3.2" ry="1.1" transform="rotate(25 1411.4 796.3)" fill="#d0f0ff" opacity="0.21"/>
<ellipse cx="1438.5" cy="801.7" rx="3.2" ry="1.1" transform="rotate(25 1438.5 801.7)" fill="#d0f0ff" opacity="0.17"/>
<ellipse cx="1452.1" cy="804.4" rx="3.2" ry="1.1" transform="rotate(25 1452.1 804.4)" fill="#d0f0ff" opacity="0.26"/>
<ellipse cx="1502.1" cy="814.4" rx="3.2" ry="1.1" transform="rotate(25 1502.1 814.4)" fill="#d0f0ff" opacity="0.15"/>
<ellipse cx="1515.3" cy="817.1" rx="3.2" ry="1.1" transform="rotate(25 1515.3 817.1)" fill="#d0f0ff" opacity="0.22"/>
<ellipse cx="1528.1" cy="819.6" rx="3.2" ry="1.1" transform="rotate(25 1528.1 819.6)" fill="#d0f0ff" opacity="0.18"/>
<ellipse cx="1541.6" cy="822.3" rx="3.2" ry="1.1" transform="rotate(25 1541.6 822.3)" fill="#d0f0ff" opacity="0.23"/>
<ellipse cx="1554.7" cy="824.9" rx="3.2" ry="1.1" transform="rotate(25 1554.7 824.9)" fill="#d0f0ff" opacity="0.27"/>
<ellipse cx="1567.9" cy="827.6" rx="3.2" ry="1.1" transform="rotate(25 1567.9 827.6)" fill="#d0f0ff" opacity="0.19"/>
<ellipse cx="1594.3" cy="832.9" rx="3.2" ry="1.1" transform="rotate(25 1594.3 832.9)" fill="#d0f0ff" opacity="0.27"/>
<ellipse cx="1633.5" cy="840.7" rx="3.2" ry="1.1" transform="rotate(25 1633.5 840.7)" fill="#d0f0ff" opacity="0.23"/>
<ellipse cx="1647.5" cy="843.5" rx="3.2" ry="1.1" transform="rotate(25 1647.5 843.5)" fill="#d0f0ff" opacity="0.11"/>
<ellipse cx="1412.2" cy="807.7" rx="3.2" ry="1.1" transform="rotate(25 1412.2 807.7)" fill="#d0f0ff" opacity="0.19"/>
<ellipse cx="1597.1" cy="850.2" rx="3.2" ry="1.1" transform="rotate(25 1597.1 850.2)" fill="#d0f0ff" opacity="0.13"/>
<ellipse cx="1624.1" cy="856.4" rx="3.2" ry="1.1" transform="rotate(25 1624.1 856.4)" fill="#d0f0ff" opacity="0.13"/>
<ellipse cx="1637.7" cy="859.5" rx="3.2" ry="1.1" transform="rotate(25 1637.7 859.5)" fill="#d0f0ff" opacity="0.15"/>
<ellipse cx="1651.6" cy="862.7" rx="3.2" ry="1.1" transform="rotate(25 1651.6 862.7)" fill="#d0f0ff" opacity="0.16"/>
<ellipse cx="1663.8" cy="865.5" rx="3.2" ry="1.1" transform="rotate(25 1663.8 865.5)" fill="#d0f0ff" opacity="0.12"/>
<ellipse cx="1677.2" cy="868.6" rx="3.2" ry="1.1" transform="rotate(25 1677.2 868.6)" fill="#d0f0ff" opacity="0.19"/>
<ellipse cx="1644.8" cy="879.4" rx="3.2" ry="1.1" transform="rotate(25 1644.8 879.4)" fill="#d0f0ff" opacity="0.19"/>
<ellipse cx="1669.5" cy="885.8" rx="3.2" ry="1.1" transform="rotate(25 1669.5 885.8)" fill="#d0f0ff" opacity="0.16"/>
<ellipse cx="1683.4" cy="889.4" rx="3.2" ry="1.1" transform="rotate(25 1683.4 889.4)" fill="#d0f0ff" opacity="0.18"/>
<path d="M1405,815 C1430,815 1460,818 1500,826 C1570,845 1640,880 1685,912 L1685,1500 L1405,1500 Z" fill="url(#r5)"/>
<path d="M1405,815 C1430,815 1460,818 1500,826 C1570,845 1640,880 1685,912 L1685,1500 L1405,1500 Z" fill="url(#r5b)"/>
<path d="M1405,815 C1430,815 1460,818 1500,826 C1560,842 1600,860 1627,877 L1405,1021 Z" fill="#1a3ac8"/>
<ellipse cx="1413.7" cy="827.1" rx="2.6" ry="0.9" transform="rotate(-30 1413.7 827.1)" fill="#e0d8ff" opacity="0.38"/>
<ellipse cx="1414.5" cy="839.4" rx="1.9" ry="0.7" transform="rotate(-30 1414.5 839.4)" fill="#e0d8ff" opacity="0.41"/>
<ellipse cx="1424.2" cy="836.2" rx="3.2" ry="1.1" transform="rotate(-30 1424.2 836.2)" fill="#e0d8ff" opacity="0.79"/>
<ellipse cx="1433.9" cy="833.0" rx="3.8" ry="1.3" transform="rotate(-30 1433.9 833.0)" fill="#e0d8ff" opacity="0.73"/>
<ellipse cx="1444.4" cy="829.5" rx="1.9" ry="0.7" transform="rotate(-30 1444.4 829.5)" fill="#e0d8ff" opacity="0.45"/>
<ellipse cx="1414.6" cy="851.8" rx="3.8" ry="1.3" transform="rotate(-30 1414.6 851.8)" fill="#e0d8ff" opacity="0.46"/>
<ellipse cx="1434.1" cy="845.4" rx="1.9" ry="0.7" transform="rotate(-30 1434.1 845.4)" fill="#e0d8ff" opacity="0.44"/>
<ellipse cx="1444.4" cy="842.0" rx="1.9" ry="0.7" transform="rotate(-30 1444.4 842.0)" fill="#e0d8ff" opacity="0.47"/>
<ellipse cx="1463.7" cy="835.6" rx="3.2" ry="1.1" transform="rotate(-30 1463.7 835.6)" fill="#e0d8ff" opacity="0.67"/>
<ellipse cx="1473.3" cy="832.5" rx="1.9" ry="0.7" transform="rotate(-30 1473.3 832.5)" fill="#e0d8ff" opacity="0.71"/>
<ellipse cx="1483.4" cy="829.1" rx="2.6" ry="0.9" transform="rotate(-30 1483.4 829.1)" fill="#e0d8ff" opacity="0.57"/>
<ellipse cx="1412.8" cy="864.9" rx="2.6" ry="0.9" transform="rotate(-30 1412.8 864.9)" fill="#e0d8ff" opacity="0.43"/>
<ellipse cx="1423.2" cy="861.5" rx="1.9" ry="0.7" transform="rotate(-30 1423.2 861.5)" fill="#e0d8ff" opacity="0.49"/>
<ellipse cx="1443.8" cy="854.7" rx="1.9" ry="0.7" transform="rotate(-30 1443.8 854.7)" fill="#e0d8ff" opacity="0.35"/>
<ellipse cx="1453.2" cy="851.6" rx="1.9" ry="0.7" transform="rotate(-30 1453.2 851.6)" fill="#e0d8ff" opacity="0.60"/>
<ellipse cx="1463.4" cy="848.2" rx="3.2" ry="1.1" transform="rotate(-30 1463.4 848.2)" fill="#e0d8ff" opacity="0.72"/>
<ellipse cx="1473.0" cy="845.1" rx="3.2" ry="1.1" transform="rotate(-30 1473.0 845.1)" fill="#e0d8ff" opacity="0.44"/>
<ellipse cx="1482.8" cy="841.8" rx="3.2" ry="1.1" transform="rotate(-30 1482.8 841.8)" fill="#e0d8ff" opacity="0.51"/>
<ellipse cx="1493.2" cy="838.4" rx="3.2" ry="1.1" transform="rotate(-30 1493.2 838.4)" fill="#e0d8ff" opacity="0.46"/>
<ellipse cx="1503.1" cy="835.1" rx="3.2" ry="1.1" transform="rotate(-30 1503.1 835.1)" fill="#e0d8ff" opacity="0.37"/>
<ellipse cx="1415.2" cy="876.6" rx="3.2" ry="1.1" transform="rotate(-30 1415.2 876.6)" fill="#e0d8ff" opacity="0.72"/>
<ellipse cx="1424.4" cy="873.6" rx="1.9" ry="0.7" transform="rotate(-30 1424.4 873.6)" fill="#e0d8ff" opacity="0.71"/>
<ellipse cx="1444.6" cy="866.9" rx="3.2" ry="1.1" transform="rotate(-30 1444.6 866.9)" fill="#e0d8ff" opacity="0.74"/>
<ellipse cx="1454.3" cy="863.7" rx="3.8" ry="1.3" transform="rotate(-30 1454.3 863.7)" fill="#e0d8ff" opacity="0.39"/>
<ellipse cx="1463.6" cy="860.7" rx="2.6" ry="0.9" transform="rotate(-30 1463.6 860.7)" fill="#e0d8ff" opacity="0.53"/>
<ellipse cx="1473.6" cy="857.4" rx="3.8" ry="1.3" transform="rotate(-30 1473.6 857.4)" fill="#e0d8ff" opacity="0.50"/>
<ellipse cx="1494.5" cy="850.5" rx="1.9" ry="0.7" transform="rotate(-30 1494.5 850.5)" fill="#e0d8ff" opacity="0.44"/>
<ellipse cx="1514.6" cy="843.8" rx="2.6" ry="0.9" transform="rotate(-30 1514.6 843.8)" fill="#e0d8ff" opacity="0.54"/>
<ellipse cx="1524.6" cy="840.5" rx="3.8" ry="1.3" transform="rotate(-30 1524.6 840.5)" fill="#e0d8ff" opacity="0.73"/>
<ellipse cx="1414.8" cy="889.3" rx="2.6" ry="0.9" transform="rotate(-30 1414.8 889.3)" fill="#e0d8ff" opacity="0.73"/>
<ellipse cx="1425.2" cy="885.8" rx="3.2" ry="1.1" transform="rotate(-30 1425.2 885.8)" fill="#e0d8ff" opacity="0.45"/>
<ellipse cx="1434.3" cy="882.8" rx="3.8" ry="1.3" transform="rotate(-30 1434.3 882.8)" fill="#e0d8ff" opacity="0.44"/>
<ellipse cx="1443.4" cy="879.8" rx="2.6" ry="0.9" transform="rotate(-30 1443.4 879.8)" fill="#e0d8ff" opacity="0.55"/>
<ellipse cx="1452.8" cy="876.7" rx="1.9" ry="0.7" transform="rotate(-30 1452.8 876.7)" fill="#e0d8ff" opacity="0.40"/>
<ellipse cx="1462.7" cy="873.5" rx="2.6" ry="0.9" transform="rotate(-30 1462.7 873.5)" fill="#e0d8ff" opacity="0.37"/>
<ellipse cx="1472.2" cy="870.3" rx="3.2" ry="1.1" transform="rotate(-30 1472.2 870.3)" fill="#e0d8ff" opacity="0.37"/>
<ellipse cx="1502.1" cy="860.5" rx="3.8" ry="1.3" transform="rotate(-30 1502.1 860.5)" fill="#e0d8ff" opacity="0.49"/>
<ellipse cx="1511.4" cy="857.4" rx="3.8" ry="1.3" transform="rotate(-30 1511.4 857.4)" fill="#e0d8ff" opacity="0.57"/>
<ellipse cx="1521.0" cy="854.2" rx="3.8" ry="1.3" transform="rotate(-30 1521.0 854.2)" fill="#e0d8ff" opacity="0.42"/>
<ellipse cx="1530.8" cy="851.0" rx="3.2" ry="1.1" transform="rotate(-30 1530.8 851.0)" fill="#e0d8ff" opacity="0.66"/>
<ellipse cx="1540.5" cy="847.8" rx="3.2" ry="1.1" transform="rotate(-30 1540.5 847.8)" fill="#e0d8ff" opacity="0.54"/>
<ellipse cx="1549.5" cy="844.8" rx="3.2" ry="1.1" transform="rotate(-30 1549.5 844.8)" fill="#e0d8ff" opacity="0.54"/>
<ellipse cx="1413.1" cy="902.3" rx="3.2" ry="1.1" transform="rotate(-30 1413.1 902.3)" fill="#e0d8ff" opacity="0.68"/>
<ellipse cx="1422.4" cy="899.3" rx="2.6" ry="0.9" transform="rotate(-30 1422.4 899.3)" fill="#e0d8ff" opacity="0.58"/>
<ellipse cx="1432.7" cy="895.8" rx="3.2" ry="1.1" transform="rotate(-30 1432.7 895.8)" fill="#e0d8ff" opacity="0.69"/>
<ellipse cx="1470.9" cy="883.2" rx="3.2" ry="1.1" transform="rotate(-30 1470.9 883.2)" fill="#e0d8ff" opacity="0.39"/>
<ellipse cx="1481.0" cy="879.9" rx="2.6" ry="0.9" transform="rotate(-30 1481.0 879.9)" fill="#e0d8ff" opacity="0.64"/>
<ellipse cx="1491.3" cy="876.5" rx="3.8" ry="1.3" transform="rotate(-30 1491.3 876.5)" fill="#e0d8ff" opacity="0.73"/>
<ellipse cx="1501.5" cy="873.1" rx="2.6" ry="0.9" transform="rotate(-30 1501.5 873.1)" fill="#e0d8ff" opacity="0.37"/>
<ellipse cx="1511.9" cy="869.7" rx="3.2" ry="1.1" transform="rotate(-30 1511.9 869.7)" fill="#e0d8ff" opacity="0.41"/>
<ellipse cx="1521.3" cy="866.6" rx="2.6" ry="0.9" transform="rotate(-30 1521.3 866.6)" fill="#e0d8ff" opacity="0.37"/>
<ellipse cx="1531.1" cy="863.4" rx="1.9" ry="0.7" transform="rotate(-30 1531.1 863.4)" fill="#e0d8ff" opacity="0.65"/>
<ellipse cx="1540.6" cy="860.2" rx="3.2" ry="1.1" transform="rotate(-30 1540.6 860.2)" fill="#e0d8ff" opacity="0.60"/>
<ellipse cx="1550.6" cy="857.0" rx="3.2" ry="1.1" transform="rotate(-30 1550.6 857.0)" fill="#e0d8ff" opacity="0.49"/>
<ellipse cx="1559.9" cy="853.9" rx="3.2" ry="1.1" transform="rotate(-30 1559.9 853.9)" fill="#e0d8ff" opacity="0.55"/>
<ellipse cx="1569.6" cy="850.7" rx="3.8" ry="1.3" transform="rotate(-30 1569.6 850.7)" fill="#e0d8ff" opacity="0.79"/>
<ellipse cx="1413.1" cy="914.8" rx="1.9" ry="0.7" transform="rotate(-30 1413.1 914.8)" fill="#e0d8ff" opacity="0.37"/>
<ellipse cx="1422.9" cy="911.6" rx="2.6" ry="0.9" transform="rotate(-30 1422.9 911.6)" fill="#e0d8ff" opacity="0.36"/>
<ellipse cx="1432.0" cy="908.6" rx="1.9" ry="0.7" transform="rotate(-30 1432.0 908.6)" fill="#e0d8ff" opacity="0.44"/>
<ellipse cx="1442.4" cy="905.1" rx="2.6" ry="0.9" transform="rotate(-30 1442.4 905.1)" fill="#e0d8ff" opacity="0.66"/>
<ellipse cx="1452.5" cy="901.8" rx="3.2" ry="1.1" transform="rotate(-30 1452.5 901.8)" fill="#e0d8ff" opacity="0.62"/>
<ellipse cx="1461.9" cy="898.7" rx="3.8" ry="1.3" transform="rotate(-30 1461.9 898.7)" fill="#e0d8ff" opacity="0.47"/>
<ellipse cx="1472.1" cy="895.3" rx="3.8" ry="1.3" transform="rotate(-30 1472.1 895.3)" fill="#e0d8ff" opacity="0.78"/>
<ellipse cx="1481.8" cy="892.1" rx="3.8" ry="1.3" transform="rotate(-30 1481.8 892.1)" fill="#e0d8ff" opacity="0.58"/>
<ellipse cx="1491.3" cy="889.0" rx="2.6" ry="0.9" transform="rotate(-30 1491.3 889.0)" fill="#e0d8ff" opacity="0.53"/>
<ellipse cx="1501.3" cy="885.7" rx="3.2" ry="1.1" transform="rotate(-30 1501.3 885.7)" fill="#e0d8ff" opacity="0.75"/>
<ellipse cx="1510.5" cy="882.7" rx="1.9" ry="0.7" transform="rotate(-30 1510.5 882.7)" fill="#e0d8ff" opacity="0.70"/>
<ellipse cx="1530.1" cy="876.2" rx="3.8" ry="1.3" transform="rotate(-30 1530.1 876.2)" fill="#e0d8ff" opacity="0.61"/>
<ellipse cx="1540.4" cy="872.8" rx="3.8" ry="1.3" transform="rotate(-30 1540.4 872.8)" fill="#e0d8ff" opacity="0.63"/>
<ellipse cx="1550.0" cy="869.7" rx="3.2" ry="1.1" transform="rotate(-30 1550.0 869.7)" fill="#e0d8ff" opacity="0.52"/>
<ellipse cx="1559.5" cy="866.5" rx="3.2" ry="1.1" transform="rotate(-30 1559.5 866.5)" fill="#e0d8ff" opacity="0.69"/>
<ellipse cx="1569.2" cy="863.3" rx="1.9" ry="0.7" transform="rotate(-30 1569.2 863.3)" fill="#e0d8ff" opacity="0.48"/>
<ellipse cx="1579.0" cy="860.1" rx="3.8" ry="1.3" transform="rotate(-30 1579.0 860.1)" fill="#e0d8ff" opacity="0.77"/>
<ellipse cx="1413.2" cy="927.3" rx="3.2" ry="1.1" transform="rotate(-30 1413.2 927.3)" fill="#e0d8ff" opacity="0.61"/>
<ellipse cx="1423.1" cy="924.0" rx="3.8" ry="1.3" transform="rotate(-30 1423.1 924.0)" fill="#e0d8ff" opacity="0.72"/>
<ellipse cx="1432.3" cy="921.0" rx="2.6" ry="0.9" transform="rotate(-30 1432.3 921.0)" fill="#e0d8ff" opacity="0.67"/>
<ellipse cx="1442.0" cy="917.8" rx="2.6" ry="0.9" transform="rotate(-30 1442.0 917.8)" fill="#e0d8ff" opacity="0.74"/>
<ellipse cx="1452.1" cy="914.4" rx="3.2" ry="1.1" transform="rotate(-30 1452.1 914.4)" fill="#e0d8ff" opacity="0.79"/>
<ellipse cx="1471.6" cy="908.0" rx="3.8" ry="1.3" transform="rotate(-30 1471.6 908.0)" fill="#e0d8ff" opacity="0.55"/>
<ellipse cx="1482.0" cy="904.6" rx="2.6" ry="0.9" transform="rotate(-30 1482.0 904.6)" fill="#e0d8ff" opacity="0.42"/>
<ellipse cx="1491.0" cy="901.6" rx="1.9" ry="0.7" transform="rotate(-30 1491.0 901.6)" fill="#e0d8ff" opacity="0.53"/>
<ellipse cx="1500.3" cy="898.5" rx="1.9" ry="0.7" transform="rotate(-30 1500.3 898.5)" fill="#e0d8ff" opacity="0.36"/>
<ellipse cx="1519.4" cy="892.3" rx="3.8" ry="1.3" transform="rotate(-30 1519.4 892.3)" fill="#e0d8ff" opacity="0.64"/>
<ellipse cx="1529.3" cy="889.0" rx="3.8" ry="1.3" transform="rotate(-30 1529.3 889.0)" fill="#e0d8ff" opacity="0.43"/>
<ellipse cx="1538.8" cy="885.8" rx="1.9" ry="0.7" transform="rotate(-30 1538.8 885.8)" fill="#e0d8ff" opacity="0.80"/>
<ellipse cx="1548.9" cy="882.5" rx="3.8" ry="1.3" transform="rotate(-30 1548.9 882.5)" fill="#e0d8ff" opacity="0.35"/>
<ellipse cx="1559.2" cy="879.1" rx="3.2" ry="1.1" transform="rotate(-30 1559.2 879.1)" fill="#e0d8ff" opacity="0.39"/>
<ellipse cx="1569.1" cy="875.8" rx="1.9" ry="0.7" transform="rotate(-30 1569.1 875.8)" fill="#e0d8ff" opacity="0.47"/>
<ellipse cx="1579.1" cy="872.5" rx="3.2" ry="1.1" transform="rotate(-30 1579.1 872.5)" fill="#e0d8ff" opacity="0.67"/>
<ellipse cx="1588.5" cy="869.4" rx="3.2" ry="1.1" transform="rotate(-30 1588.5 869.4)" fill="#e0d8ff" opacity="0.66"/>
<ellipse cx="1413.5" cy="939.7" rx="3.2" ry="1.1" transform="rotate(-30 1413.5 939.7)" fill="#e0d8ff" opacity="0.76"/>
<ellipse cx="1423.4" cy="936.4" rx="3.8" ry="1.3" transform="rotate(-30 1423.4 936.4)" fill="#e0d8ff" opacity="0.56"/>
<ellipse cx="1433.7" cy="933.0" rx="1.9" ry="0.7" transform="rotate(-30 1433.7 933.0)" fill="#e0d8ff" opacity="0.55"/>
<ellipse cx="1443.8" cy="929.7" rx="3.2" ry="1.1" transform="rotate(-30 1443.8 929.7)" fill="#e0d8ff" opacity="0.71"/>
<ellipse cx="1453.4" cy="926.5" rx="3.8" ry="1.3" transform="rotate(-30 1453.4 926.5)" fill="#e0d8ff" opacity="0.76"/>
<ellipse cx="1462.6" cy="923.5" rx="1.9" ry="0.7" transform="rotate(-30 1462.6 923.5)" fill="#e0d8ff" opacity="0.63"/>
<ellipse cx="1481.9" cy="917.1" rx="2.6" ry="0.9" transform="rotate(-30 1481.9 917.1)" fill="#e0d8ff" opacity="0.66"/>
<ellipse cx="1491.8" cy="913.8" rx="1.9" ry="0.7" transform="rotate(-30 1491.8 913.8)" fill="#e0d8ff" opacity="0.38"/>
<ellipse cx="1501.7" cy="910.6" rx="3.8" ry="1.3" transform="rotate(-30 1501.7 910.6)" fill="#e0d8ff" opacity="0.75"/>
<ellipse cx="1530.3" cy="901.1" rx="1.9" ry="0.7" transform="rotate(-30 1530.3 901.1)" fill="#e0d8ff" opacity="0.37"/>
<ellipse cx="1550.9" cy="894.4" rx="3.2" ry="1.1" transform="rotate(-30 1550.9 894.4)" fill="#e0d8ff" opacity="0.56"/>
<ellipse cx="1560.1" cy="891.3" rx="2.6" ry="0.9" transform="rotate(-30 1560.1 891.3)" fill="#e0d8ff" opacity="0.48"/>
<ellipse cx="1569.6" cy="888.2" rx="3.2" ry="1.1" transform="rotate(-30 1569.6 888.2)" fill="#e0d8ff" opacity="0.47"/>
<ellipse cx="1579.0" cy="885.1" rx="3.2" ry="1.1" transform="rotate(-30 1579.0 885.1)" fill="#e0d8ff" opacity="0.76"/>
<ellipse cx="1589.2" cy="881.7" rx="3.2" ry="1.1" transform="rotate(-30 1589.2 881.7)" fill="#e0d8ff" opacity="0.73"/>
<ellipse cx="1599.1" cy="878.4" rx="3.2" ry="1.1" transform="rotate(-30 1599.1 878.4)" fill="#e0d8ff" opacity="0.36"/>
<ellipse cx="1608.9" cy="875.2" rx="3.2" ry="1.1" transform="rotate(-30 1608.9 875.2)" fill="#e0d8ff" opacity="0.67"/>
<ellipse cx="1413.9" cy="952.0" rx="2.6" ry="0.9" transform="rotate(-30 1413.9 952.0)" fill="#e0d8ff" opacity="0.79"/>
<ellipse cx="1433.6" cy="945.6" rx="2.6" ry="0.9" transform="rotate(-30 1433.6 945.6)" fill="#e0d8ff" opacity="0.48"/>
<ellipse cx="1442.9" cy="942.5" rx="3.2" ry="1.1" transform="rotate(-30 1442.9 942.5)" fill="#e0d8ff" opacity="0.42"/>
<ellipse cx="1453.3" cy="939.0" rx="3.2" ry="1.1" transform="rotate(-30 1453.3 939.0)" fill="#e0d8ff" opacity="0.70"/>
<ellipse cx="1463.4" cy="935.7" rx="3.2" ry="1.1" transform="rotate(-30 1463.4 935.7)" fill="#e0d8ff" opacity="0.51"/>
<ellipse cx="1473.0" cy="932.6" rx="1.9" ry="0.7" transform="rotate(-30 1473.0 932.6)" fill="#e0d8ff" opacity="0.54"/>
<ellipse cx="1483.0" cy="929.3" rx="3.2" ry="1.1" transform="rotate(-30 1483.0 929.3)" fill="#e0d8ff" opacity="0.47"/>
<ellipse cx="1493.3" cy="925.9" rx="3.2" ry="1.1" transform="rotate(-30 1493.3 925.9)" fill="#e0d8ff" opacity="0.79"/>
<ellipse cx="1512.4" cy="919.5" rx="3.8" ry="1.3" transform="rotate(-30 1512.4 919.5)" fill="#e0d8ff" opacity="0.64"/>
<ellipse cx="1522.0" cy="916.4" rx="2.6" ry="0.9" transform="rotate(-30 1522.0 916.4)" fill="#e0d8ff" opacity="0.74"/>
<ellipse cx="1531.6" cy="913.2" rx="3.2" ry="1.1" transform="rotate(-30 1531.6 913.2)" fill="#e0d8ff" opacity="0.43"/>
<ellipse cx="1541.3" cy="910.0" rx="3.8" ry="1.3" transform="rotate(-30 1541.3 910.0)" fill="#e0d8ff" opacity="0.45"/>
<ellipse cx="1550.8" cy="906.9" rx="2.6" ry="0.9" transform="rotate(-30 1550.8 906.9)" fill="#e0d8ff" opacity="0.58"/>
<ellipse cx="1560.2" cy="903.8" rx="3.8" ry="1.3" transform="rotate(-30 1560.2 903.8)" fill="#e0d8ff" opacity="0.42"/>
<ellipse cx="1569.4" cy="900.7" rx="3.2" ry="1.1" transform="rotate(-30 1569.4 900.7)" fill="#e0d8ff" opacity="0.62"/>
<ellipse cx="1579.0" cy="897.6" rx="2.6" ry="0.9" transform="rotate(-30 1579.0 897.6)" fill="#e0d8ff" opacity="0.47"/>
<ellipse cx="1598.6" cy="891.1" rx="2.6" ry="0.9" transform="rotate(-30 1598.6 891.1)" fill="#e0d8ff" opacity="0.52"/>
<ellipse cx="1414.6" cy="964.3" rx="3.2" ry="1.1" transform="rotate(-30 1414.6 964.3)" fill="#e0d8ff" opacity="0.36"/>
<ellipse cx="1424.0" cy="961.2" rx="1.9" ry="0.7" transform="rotate(-30 1424.0 961.2)" fill="#e0d8ff" opacity="0.68"/>
<ellipse cx="1434.3" cy="957.8" rx="3.8" ry="1.3" transform="rotate(-30 1434.3 957.8)" fill="#e0d8ff" opacity="0.61"/>
<ellipse cx="1454.3" cy="951.2" rx="3.8" ry="1.3" transform="rotate(-30 1454.3 951.2)" fill="#e0d8ff" opacity="0.73"/>
<ellipse cx="1464.3" cy="947.9" rx="3.2" ry="1.1" transform="rotate(-30 1464.3 947.9)" fill="#e0d8ff" opacity="0.54"/>
<ellipse cx="1473.7" cy="944.8" rx="3.2" ry="1.1" transform="rotate(-30 1473.7 944.8)" fill="#e0d8ff" opacity="0.46"/>
<ellipse cx="1483.3" cy="941.7" rx="2.6" ry="0.9" transform="rotate(-30 1483.3 941.7)" fill="#e0d8ff" opacity="0.46"/>
<ellipse cx="1492.9" cy="938.5" rx="3.8" ry="1.3" transform="rotate(-30 1492.9 938.5)" fill="#e0d8ff" opacity="0.74"/>
<ellipse cx="1502.7" cy="935.3" rx="2.6" ry="0.9" transform="rotate(-30 1502.7 935.3)" fill="#e0d8ff" opacity="0.75"/>
<ellipse cx="1512.2" cy="932.1" rx="3.2" ry="1.1" transform="rotate(-30 1512.2 932.1)" fill="#e0d8ff" opacity="0.76"/>
<ellipse cx="1521.4" cy="929.1" rx="2.6" ry="0.9" transform="rotate(-30 1521.4 929.1)" fill="#e0d8ff" opacity="0.42"/>
<ellipse cx="1541.3" cy="922.5" rx="3.8" ry="1.3" transform="rotate(-30 1541.3 922.5)" fill="#e0d8ff" opacity="0.56"/>
<ellipse cx="1550.6" cy="919.4" rx="1.9" ry="0.7" transform="rotate(-30 1550.6 919.4)" fill="#e0d8ff" opacity="0.64"/>
<ellipse cx="1560.9" cy="916.1" rx="3.2" ry="1.1" transform="rotate(-30 1560.9 916.1)" fill="#e0d8ff" opacity="0.68"/>
<ellipse cx="1413.5" cy="977.2" rx="3.8" ry="1.3" transform="rotate(-30 1413.5 977.2)" fill="#e0d8ff" opacity="0.79"/>
<ellipse cx="1433.7" cy="970.5" rx="1.9" ry="0.7" transform="rotate(-30 1433.7 970.5)" fill="#e0d8ff" opacity="0.71"/>
<ellipse cx="1443.6" cy="967.2" rx="3.8" ry="1.3" transform="rotate(-30 1443.6 967.2)" fill="#e0d8ff" opacity="0.67"/>
<ellipse cx="1453.9" cy="963.9" rx="3.2" ry="1.1" transform="rotate(-30 1453.9 963.9)" fill="#e0d8ff" opacity="0.56"/>
<ellipse cx="1463.3" cy="960.8" rx="2.6" ry="0.9" transform="rotate(-30 1463.3 960.8)" fill="#e0d8ff" opacity="0.70"/>
<ellipse cx="1473.0" cy="957.6" rx="2.6" ry="0.9" transform="rotate(-30 1473.0 957.6)" fill="#e0d8ff" opacity="0.47"/>
<ellipse cx="1482.6" cy="954.4" rx="3.2" ry="1.1" transform="rotate(-30 1482.6 954.4)" fill="#e0d8ff" opacity="0.66"/>
<ellipse cx="1502.5" cy="947.8" rx="3.2" ry="1.1" transform="rotate(-30 1502.5 947.8)" fill="#e0d8ff" opacity="0.49"/>
<ellipse cx="1512.2" cy="944.6" rx="1.9" ry="0.7" transform="rotate(-30 1512.2 944.6)" fill="#e0d8ff" opacity="0.65"/>
<ellipse cx="1423.9" cy="986.3" rx="3.8" ry="1.3" transform="rotate(-30 1423.9 986.3)" fill="#e0d8ff" opacity="0.70"/>
<ellipse cx="1434.2" cy="982.9" rx="2.6" ry="0.9" transform="rotate(-30 1434.2 982.9)" fill="#e0d8ff" opacity="0.59"/>
<ellipse cx="1444.3" cy="979.5" rx="1.9" ry="0.7" transform="rotate(-30 1444.3 979.5)" fill="#e0d8ff" opacity="0.60"/>
<ellipse cx="1453.7" cy="976.4" rx="2.6" ry="0.9" transform="rotate(-30 1453.7 976.4)" fill="#e0d8ff" opacity="0.56"/>
<ellipse cx="1463.5" cy="973.2" rx="2.6" ry="0.9" transform="rotate(-30 1463.5 973.2)" fill="#e0d8ff" opacity="0.67"/>
<ellipse cx="1472.9" cy="970.1" rx="3.8" ry="1.3" transform="rotate(-30 1472.9 970.1)" fill="#e0d8ff" opacity="0.74"/>
<ellipse cx="1414.1" cy="1002.0" rx="2.6" ry="0.9" transform="rotate(-30 1414.1 1002.0)" fill="#e0d8ff" opacity="0.48"/>
<ellipse cx="1423.6" cy="998.9" rx="1.9" ry="0.7" transform="rotate(-30 1423.6 998.9)" fill="#e0d8ff" opacity="0.72"/>
<ellipse cx="1442.6" cy="992.6" rx="3.2" ry="1.1" transform="rotate(-30 1442.6 992.6)" fill="#e0d8ff" opacity="0.74"/>
<path d="M1405,815 C1430,815 1460,818 1500,826 C1570,845 1640,880 1685,912" fill="none" stroke="#48d8e8" stroke-width="3"/>
<!-- BOTTOM STRIP -->
<rect x="291" y="1474" width="1114" height="22" fill="url(#bot)"/>
<ellipse cx="445" cy="1490" rx="3.5" ry="1.2" transform="rotate(-25 445 1490)" fill="#d8e0ff" opacity="0.6"/>
<ellipse cx="470" cy="1485" rx="3.5" ry="1.2" transform="rotate(-25 470 1485)" fill="#d8e0ff" opacity="0.6"/>
<ellipse cx="495" cy="1480" rx="3.5" ry="1.2" transform="rotate(-25 495 1480)" fill="#d8e0ff" opacity="0.6"/>
<ellipse cx="520" cy="1476" rx="3.5" ry="1.2" transform="rotate(-25 520 1476)" fill="#d8e0ff" opacity="0.6"/>
<ellipse cx="480" cy="1493" rx="3.5" ry="1.2" transform="rotate(-25 480 1493)" fill="#d8e0ff" opacity="0.6"/>
<ellipse cx="505" cy="1488" rx="3.5" ry="1.2" transform="rotate(-25 505 1488)" fill="#d8e0ff" opacity="0.6"/>
<ellipse cx="530" cy="1483" rx="3.5" ry="1.2" transform="rotate(-25 530 1483)" fill="#d8e0ff" opacity="0.6"/>
<ellipse cx="455" cy="1478" rx="3.5" ry="1.2" transform="rotate(-25 455 1478)" fill="#d8e0ff" opacity="0.6"/>
<ellipse cx="420" cy="1487" rx="3.5" ry="1.2" transform="rotate(-25 420 1487)" fill="#d8e0ff" opacity="0.6"/>
<ellipse cx="395" cy="1479" rx="3.5" ry="1.2" transform="rotate(-25 395 1479)" fill="#d8e0ff" opacity="0.6"/>
</svg>
<div id="desk">
 <svg style="position:absolute;left:20px;top:10px" width="38" height="42" viewBox="0 0 38 42">
  <path d="M2,5 L36,5 L35.5,7 L2.5,7 Z" fill="#cfd8de" opacity="0.7"/>
  <path d="M0.8,3.5 L35.5,3.5 L32,41.5 L4.3,41.5 Z" fill="#dfe6eb" opacity="0.9"/>
  <path d="M0.8,3.5 L35.5,3.5 L35.3,5.5 L1,5.5 Z" fill="#f6f8fa"/>
  <path d="M4,36 L32.5,36 L32,41.5 L4.3,41.5 Z" fill="#bcc5cc"/>
  <g stroke-linejoin="round">
   <path d="M11.80,15.30 L13.90,11.30 L22.60,11.50 L25.60,14.40 L23.40,19.70 L18.10,18.30 L18.10,15.30 L15.50,17.80 Z" fill="#0a72d8" stroke="#0a72d8" stroke-width="0.8"/>
   <path d="M7.90,20.40 L12.30,18.40 L15.00,23.40 L13.00,24.50 L15.40,25.60 L15.70,30.00 L11.40,30.70 L8.20,24.70 Z" fill="#0d84e6" stroke="#0d84e6" stroke-width="0.8"/>
   <path d="M26.30,21.00 L28.40,23.80 L27.00,28.20 L21.70,31.70 L18.00,27.80 L21.70,23.90 L22.90,25.00 L23.00,22.80 Z" fill="#0a86ea" stroke="#0a86ea" stroke-width="0.8"/>
  </g>
 </svg>
 <div class="dl" style="top:58px">Recycle Bin</div>
 <svg style="position:absolute;left:14px;top:105px;color:#94bbd8" width="48" height="48" viewBox="0 0 48 48"><use href="#edge"/></svg>
 <svg style="position:absolute;left:14px;top:140px" width="13" height="13" viewBox="0 0 13 13">
  <rect x="0.2" y="0" width="12.5" height="12.5" fill="#fff"/>
  <path d="M3,10 L9,4" stroke="#1a7ee0" stroke-width="1.8"/><path d="M5.2,3.2 L9.8,3.2 L9.8,7.8 Z" fill="#1a7ee0"/>
 </svg>
 <div class="dl" style="top:157px">Microsoft</div>
 <div class="dl" style="top:172.5px">Edge</div>
</div>

<div id="term">
 <div id="tbar">
  <div id="shieldbox"></div>
  <svg style="position:absolute;left:0;top:0" width="1114" height="40" viewBox="291 88 1114 40">
   <path d="M308,104.5 C305.5,106.3 303,107 301.3,107 L301.3,111.5 C301.3,116 304,118.5 308,120.5 C312,118.5 314.7,116 314.7,111.5 L314.7,107 C313,107 310.5,106.3 308,104.5 Z" fill="none" stroke="#c0c0c0" stroke-width="1.1"/>
  </svg>
  <div id="tab">
   <svg style="position:absolute;left:8px;top:10px" width="18" height="14" viewBox="0 0 18 14">
    <path d="M3.5,0.5 L17.5,0.5 L14.5,12.5 L0.5,12.5 Z" fill="#3f7de2"/>
    <path d="M4.5,2.5 L8.8,6.2 L3.8,10" fill="none" stroke="#fff" stroke-width="1.3"/>
    <path d="M8.6,10.2 L12.8,10.2" stroke="#fff" stroke-width="1.3"/>
   </svg>
   <div id="ttl">Administrator: Windows PowerShell</div>
   <svg style="position:absolute;left:213px;top:10px" width="12" height="12" viewBox="0 0 12 12"><path d="M1.5,1.5 L10.5,10.5 M10.5,1.5 L1.5,10.5" stroke="#e8e8e8" stroke-width="1.2"/></svg>
  </div>
  <svg style="position:absolute;left:0;top:0" width="1114" height="40" viewBox="291 88 1114 40">
   <path d="M583.3,106.5 L583.3,116.5 M578.3,111.5 L588.3,111.5" stroke="#e0e0e0" stroke-width="1.1"/>
   <path d="M600.5,103 L600.5,123" stroke="#3a3a3a" stroke-width="1"/>
   <path d="M609.3,109.5 L613.3,113.5 L617.3,109.5" fill="none" stroke="#d8d8d8" stroke-width="1.1"/>
   <path d="M1284.8,107.5 L1295.2,107.5" stroke="#f0f0f0" stroke-width="1"/>
   <rect x="1331.5" y="103.5" width="9.5" height="9.5" rx="1.5" fill="none" stroke="#f0f0f0" stroke-width="1.1"/>
   <path d="M1376.6,102.8 L1387.2,113.2 M1387.2,102.8 L1376.6,113.2" stroke="#f0f0f0" stroke-width="1"/>
  </svg>
 </div>
 <div id="sbar"></div>
 <div id="cursor"></div>
<pre>PS C:\Users\administrator> <span class="y">Get-VMSwitch</span> <span class="g">-Name</span> <span class="b">"vSwitch-SET"</span> | <span class="y">Format-List</span>


Name                                             : vSwitch-SET
Id                                               : 42707387-9cb9-413f-bfb1-5912acd4a2a1
Notes                                            :
Extensions                                       : {Microsoft Windows Filtering Platform, Microsoft NDIS Capture}
BandwidthReservationMode                         : Weight
PacketDirectEnabled                              : False
EmbeddedTeamingEnabled                           : True
AllowNetLbfoTeams                                : False
IovEnabled                                       : False
SwitchType                                       : External
AllowManagementOS                                : True
NetAdapterInterfaceDescription                   : Teamed-Interface
NetAdapterInterfaceDescriptions                  : {Microsoft Hyper-V Network Adapter, Microsoft Hyper-V Network
                                                   Adapter #2, Microsoft Hyper-V Network Adapter #3, Microsoft Hyper-V
                                                   Network Adapter #4}
NetAdapterInterfaceGuid                          : {fc2fca8b-4bc3-4124-92c3-d330be066615,
                                                   580a330c-a534-4466-9766-e6d9ca14eb82,
                                                   1b88aab7-a743-43c7-abbd-1a46851ed2f5,
                                                   d002fb72-ae55-4c66-8949-5187a7cc63c6}
IovSupport                                       : False
IovSupportReasons                                : {Ensure that the system has chipset support for SR-IOV and that I/O
                                                   virtualization is enabled in the BIOS., To use SR-IOV on this
                                                   system, the system BIOS must be updated to allow Windows to control
                                                   PCI Express. Contact your system manufacturer for an update.,
                                                   SR-IOV cannot be used on this system as the PCI Express hardware
                                                   does not support Access Control Services (ACS) at any root port.
                                                   Contact your system vendor for further information., This network
                                                   adapter does not support SR-IOV.}
AvailableIPSecSA                                 : 0
NumberIPSecSAAllocated                           : 0
AvailableVMQueues                                : 0
NumberVmqAllocated                               : 0
IovQueuePairCount                                : 0
IovQueuePairsInUse                               : 0
IovVirtualFunctionCount                          : 0
IovVirtualFunctionsInUse                         : 0
PacketDirectInUse                                : False
DefaultQueueVrssEnabledRequested                 : True
DefaultQueueVrssEnabled                          : False
DefaultQueueVmmqEnabledRequested                 : True
DefaultQueueVmmqEnabled                          : False
DefaultQueueVrssMaxQueuePairsRequested           : 16
DefaultQueueVrssMaxQueuePairs                    : 0
DefaultQueueVrssMinQueuePairsRequested           : 1
DefaultQueueVrssMinQueuePairs                    : 0
DefaultQueueVrssQueueSchedulingModeRequested     : StaticVrss
DefaultQueueVrssQueueSchedulingMode              : Dynamic
DefaultQueueVrssExcludePrimaryProcessorRequested : False
DefaultQueueVrssExcludePrimaryProcessor          : False
SoftwareRscEnabled                               : True
RscOffloadEnabled                                : False
BandwidthPercentage                              : 100
DefaultFlowMinimumBandwidthAbsolute              : 0
DefaultFlowMinimumBandwidthWeight                : 1
CimSession                                       : CimSession: .
ComputerName                                     : HV4
IsDeleted                                        : False
DefaultQueueVmmqQueuePairs                       : 0
DefaultQueueVmmqQueuePairsRequested              : 16



PS C:\Users\administrator> </pre>
</div>
<div id="taskbar">
 <svg style="position:absolute;left:0;top:0" width="1664" height="47" viewBox="21 1496 1664 47">
  <g fill="url(#winlogo)">
   <rect x="631.2" y="1508.8" width="11" height="11" rx="0.6"/><rect x="643.5" y="1508.8" width="11" height="11" rx="0.6"/>
   <rect x="631.2" y="1521" width="11" height="11" rx="0.6"/><rect x="643.5" y="1521" width="11" height="11" rx="0.6"/>
  </g>
  <rect x="668.3" y="1505.2" width="218" height="30" rx="15" fill="#fbfbfb" stroke="#dedede" stroke-width="1"/>
  <circle cx="685.2" cy="1518.8" r="5.3" fill="none" stroke="#1c1c1c" stroke-width="1.6"/>
  <path d="M689.1,1522.7 L693.2,1526.8" stroke="#1c1c1c" stroke-width="1.8" stroke-linecap="round"/>
  <!-- task view -->
  <rect x="905.4" y="1509" width="17.6" height="15.5" rx="1.5" fill="#fafafa" stroke="#e6e6e6" stroke-width="0.6"/>
  <rect x="899.6" y="1515" width="17.9" height="15.8" rx="1.5" fill="#1e1e1e"/>
  <rect x="905.4" y="1515" width="12.1" height="9.5" fill="#bdbdbd"/>
  <!-- folder -->
  <path d="M943.2,1511 C943.2,1509.8 944,1509 945.2,1509 L951.5,1509 L953.8,1511.5 L966,1511.5 C967,1511.5 967.7,1512.2 967.7,1513.2 L967.7,1514 L943.2,1514 Z" fill="#e3a200"/>
  <path d="M943.2,1513.5 L952,1513.5 L954,1512 L966,1512 C967,1512 967.7,1512.7 967.7,1513.7 L967.7,1529 C967.7,1530 967,1530.6 966,1530.6 L945,1530.6 C944,1530.6 943.2,1530 943.2,1529 Z" fill="url(#folderBody)"/>
  <path d="M947.6,1525 C947.6,1524 948.4,1523.4 949.4,1523.4 L961,1523.4 C962,1523.4 962.9,1524 962.9,1525 L962.9,1530.6 L947.6,1530.6 Z" fill="#1280dc"/>
  <path d="M951,1526.2 L959.5,1526.2" stroke="#0b5cb8" stroke-width="1.2"/>
  <!-- server manager -->
  <path d="M1032.3,1511 L1040,1508.8 L1049.7,1510.5 L1049.7,1529 L1040,1530.7 L1032.3,1528.8 Z" fill="url(#srv)"/>
  <path d="M1032.3,1511 L1040,1508.8 L1049.7,1510.5 L1042,1512.6 Z" fill="#40d8f0"/>
  <g stroke="#0b6d96" stroke-width="0.9" opacity="0.8">
   <path d="M1033,1514 L1041.5,1515.5 M1033,1517 L1041.5,1518.5 M1033,1520 L1041.5,1521.5 M1033,1523 L1041.5,1524.5 M1033,1526 L1041.5,1527.5"/>
  </g>
  <path d="M1043.6,1519 L1049,1517 L1055.2,1518.5 L1055.2,1529.3 L1049,1530.7 L1043.6,1529.5 Z" fill="#16b4dc"/>
  <path d="M1043.6,1519 L1049,1517 L1055.2,1518.5 L1049.5,1520.3 Z" fill="#44e2f4"/>
  <g stroke="#0b6d96" stroke-width="0.8" opacity="0.8"><path d="M1044.3,1522 L1049,1523 M1044.3,1525 L1049,1526 M1044.3,1528 L1049,1529"/></g>
  <!-- terminal -->
  <rect x="1068.3" y="1501" width="38.3" height="38.3" rx="4.5" fill="#f9f9f9" stroke="#e8e8e8" stroke-width="0.6"/>
  <rect x="1075.6" y="1510.8" width="24" height="17.9" rx="2" fill="#2b2b2b"/>
  <rect x="1076.6" y="1511.3" width="22" height="2.5" fill="#5a5a5a"/>
  <path d="M1078.8,1516.5 L1083.8,1520.8 L1078.8,1525.2" fill="none" stroke="#dadada" stroke-width="2"/>
  <rect x="1086.2" y="1524" width="7.8" height="2" fill="#f2f2f2"/>
  <rect x="1079.7" y="1536" width="15.8" height="3" rx="1.5" fill="#0067c0"/>
  <!-- tray: server manager w/ red -->
  <path d="M1584,1515.5 L1587,1514 L1590,1515.5 L1590,1526 L1587,1527.5 L1584,1526 Z" fill="#1a86e0"/>
  <path d="M1593,1515.5 L1596,1514 L1600,1515.5 L1600,1526 L1596,1527.5 L1593,1526 Z" fill="#52d4f4"/>
  <path d="M1590,1518 L1593,1518 M1590,1522 L1593,1522" stroke="#8ad8f4" stroke-width="1.2"/>
  <circle cx="1596.5" cy="1524.8" r="2.6" fill="#fff" stroke="#b01818" stroke-width="1.6"/>
  <!-- network monitor -->
  <path d="M1625.8,1512.6 L1617.2,1512.6 Q1616.4,1512.6 1616.4,1513.4 L1616.4,1523.8 Q1616.4,1524.6 1617.2,1524.6 L1627.2,1524.6" fill="none" stroke="#1a1a1a" stroke-width="1.2"/>
  <path d="M1619.6,1527.6 L1628.6,1527.6 M1621.6,1524.8 L1621.6,1527.6 M1626.2,1524.8 L1626.2,1527.6" stroke="#1a1a1a" stroke-width="1.1"/>
  <rect x="1627.8" y="1512.4" width="4" height="5.6" rx="1.6" fill="#fff" stroke="#1a1a1a" stroke-width="1.1"/>
  <path d="M1629.8,1518 L1629.8,1528" stroke="#1a1a1a" stroke-width="1.1"/>
  <!-- speaker -->
  <path d="M1640.6,1517.4 L1643,1517.4 L1646.4,1514 L1646.4,1526.2 L1643,1522.8 L1640.6,1522.8 Z" fill="none" stroke="#1a1a1a" stroke-width="1.1" stroke-linejoin="round"/>
  <path d="M1648.6,1517.6 Q1650.4,1520.1 1648.6,1522.6" fill="none" stroke="#1a1a1a" stroke-width="1.1"/>
  <path d="M1650.6,1515.2 Q1653.8,1520.1 1650.6,1525" fill="none" stroke="#1a1a1a" stroke-width="1.1"/>
  <path d="M1652.6,1512.9 Q1657.6,1520.1 1652.6,1527.3" fill="none" stroke="#1a1a1a" stroke-width="1.1"/>
  <!-- bell -->
  <path d="M1673.6,1525.2 L1675.5,1522 L1675.5,1518 C1675.5,1515.2 1677.5,1513 1680.2,1513 C1683,1513 1685,1515.2 1685,1518 L1685,1525.2 Z" fill="#0a48b0"/>
  <path d="M1678.2,1526.3 Q1680.2,1528.6 1682.2,1526.3 Z" fill="#0a48b0"/>
 </svg>
 <svg style="position:absolute;left:966px;top:11.5px;color:#eeeeee" width="24.5" height="24.5" viewBox="0 0 48 48"><use href="#edge"/></svg>
 <div id="srch">Search</div>
</div>
</div>
</body></html>
